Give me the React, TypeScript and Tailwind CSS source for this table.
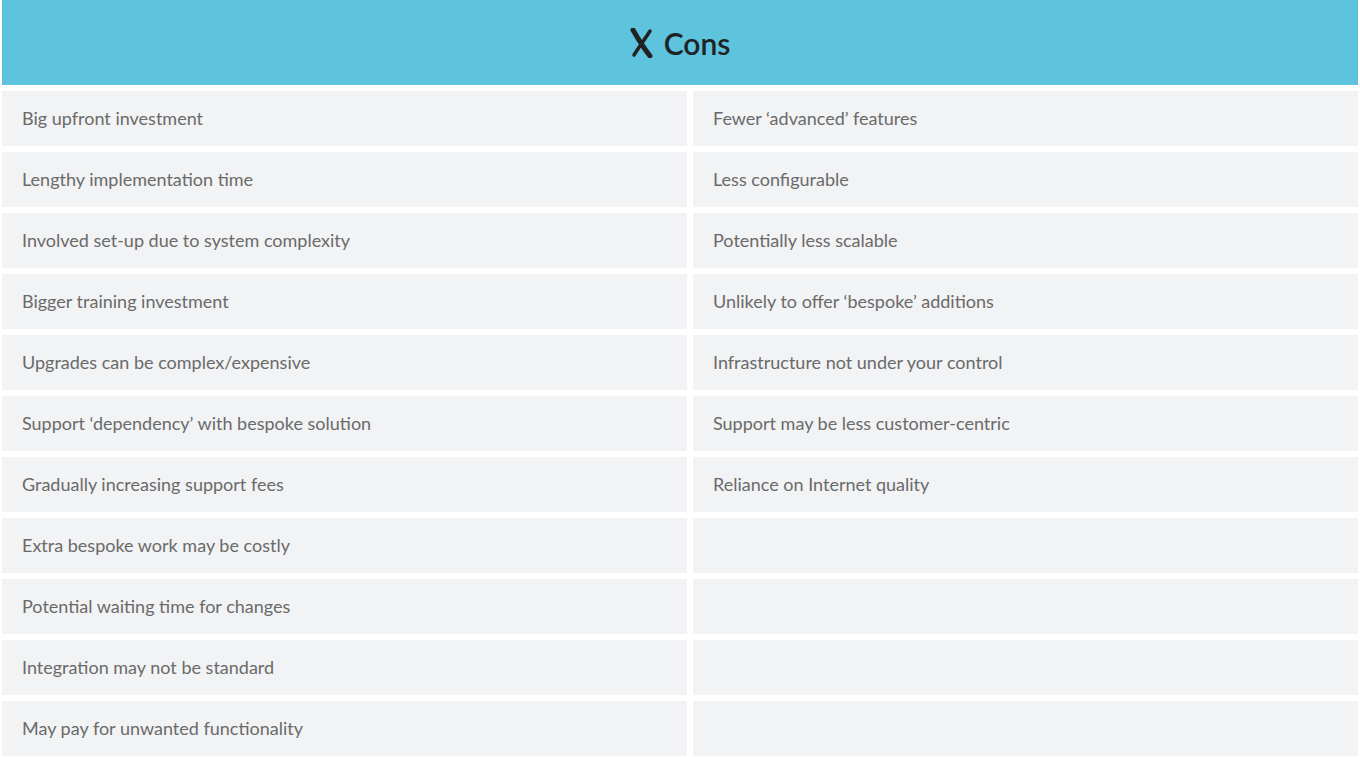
import React from 'react';

const left = [
  'Big upfront investment',
  'Lengthy implementation time',
  'Involved set-up due to system complexity',
  'Bigger training investment',
  'Upgrades can be complex/expensive',
  'Support \u2018dependency\u2019 with bespoke solution',
  'Gradually increasing support fees',
  'Extra bespoke work may be costly',
  'Potential waiting time for changes',
  'Integration may not be standard',
  'May pay for unwanted functionality',
];

const right = [
  'Fewer \u2018advanced\u2019 features',
  'Less configurable',
  'Potentially less scalable',
  'Unlikely to offer \u2018bespoke\u2019 additions',
  'Infrastructure not under your control',
  'Support may be less customer-centric',
  'Reliance on Internet quality',
  '',
  '',
  '',
  '',
];

function CrossMark() {
  return (
    <svg width="24" height="30" viewBox="0 0 24 30" className="shrink-0">
      <path d="M3 2 C7 9, 13 19, 20 28" stroke="#222" strokeWidth="5" strokeLinecap="round" fill="none" />
      <path d="M20 3 C15 11, 9 19, 4 27" stroke="#222" strokeWidth="3.5" strokeLinecap="round" fill="none" />
    </svg>
  );
}

export default function App() {
  return (
    <div className="w-[1360px] h-[757px] bg-white px-[2px] font-['Lato',sans-serif]">
      <div className="h-[85px] bg-[#5ec3dd] flex items-center justify-center gap-[10px]">
        <CrossMark />
        <span className="text-[30px] font-semibold text-[#1f2326] leading-none">Cons</span>
      </div>
      <div className="grid grid-cols-[685px_665px] gap-x-[6px] gap-y-[6px] pt-[6px]">
        {left.map((item, i) => (
          <React.Fragment key={i}>
            <div className="h-[55px] bg-[#f2f3f4] flex items-center pl-[20px] text-[18px] text-[#6a6a6a]">
              {item}
            </div>
            <div className="h-[55px] bg-[#f2f3f4] flex items-center pl-[20px] text-[18px] text-[#6a6a6a]">
              {right[i]}
            </div>
          </React.Fragment>
        ))}
      </div>
    </div>
  );
}
